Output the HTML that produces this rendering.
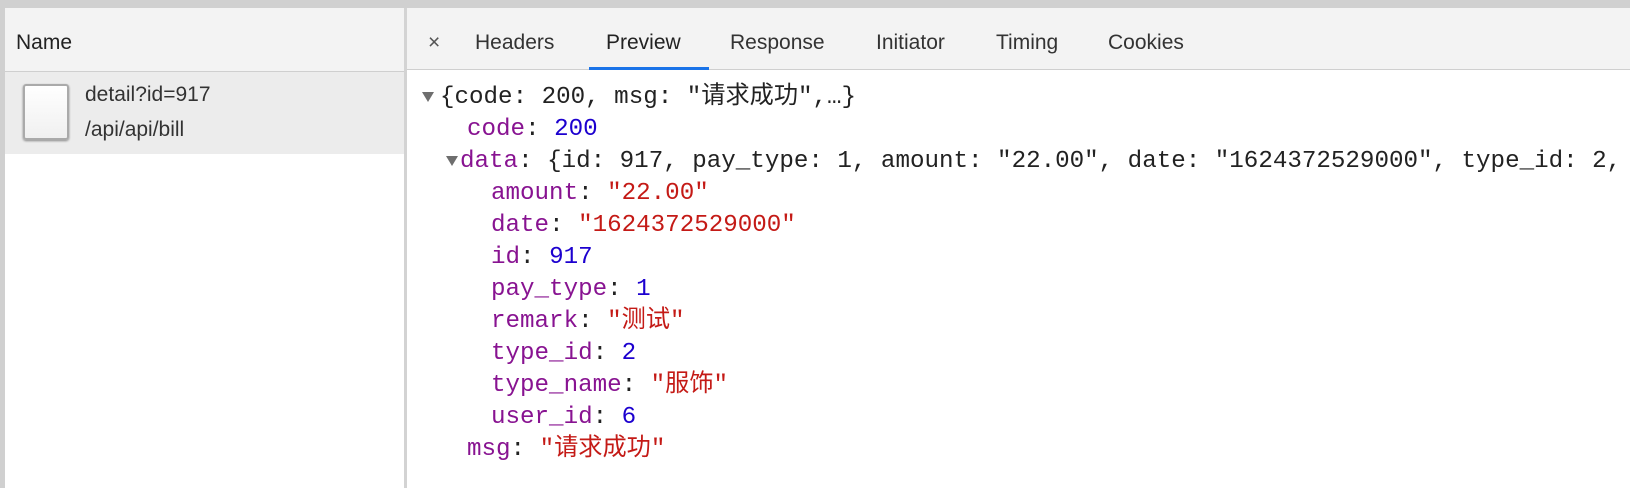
<!DOCTYPE html><html><head><meta charset="utf-8"><style>
body{margin:0;width:1630px;height:488px;background:#fff;position:relative;overflow:hidden;font-family:"Liberation Sans",sans-serif}
.a{position:absolute}
.mono{font-family:"Liberation Mono","Noto Sans CJK SC",monospace;font-size:24.2px;white-space:pre;color:#222;line-height:32px}
.k{color:#881391}.s{color:#c41a16}.n{color:#1c00cf}
.tab{position:absolute;top:31px;font-size:21px;color:#333}
.tri{display:inline-block;width:0;height:0;border-left:6px solid transparent;border-right:6px solid transparent;border-top:10px solid #6e6e6e;vertical-align:middle;margin-right:6px}
</style></head><body>
<div class="a" style="left:0;top:0;width:1630px;height:8px;background:#d0d0d0"></div>
<div class="a" style="left:0;top:8px;width:5px;height:480px;background:#d0d0d0"></div>
<div class="a" style="left:404px;top:8px;width:3px;height:480px;background:#d3d3d3"></div>
<div class="a" style="left:5px;top:8px;width:399px;height:63px;background:#f3f3f3;border-bottom:1px solid #cfcfcf"></div>
<div class="a" style="left:16px;top:31px;font-size:21px;color:#222">Name</div>
<div class="a" style="left:5px;top:72px;width:399px;height:82px;background:#ececec"></div>
<div class="a" style="left:23px;top:84px;width:42px;height:52px;background:linear-gradient(#fff,#f0f0f0);border:2px solid #aaa;border-radius:3px;box-shadow:0 1px 2px #888"></div>
<div class="a" style="left:85px;top:83px;font-size:21px;color:#333">detail?id=917</div>
<div class="a" style="left:85px;top:118px;font-size:21px;color:#333">/api/api/bill</div>
<div class="a" style="left:407px;top:8px;width:1223px;height:61px;background:#f3f3f3;border-bottom:1px solid #cfcfcf"></div>
<div class="tab" style="left:428px;color:#555">×</div>
<div class="tab" style="left:475px">Headers</div>
<div class="tab" style="left:606px;color:#222">Preview</div>
<div class="a" style="left:589px;top:67px;width:120px;height:3px;background:#1a73e8"></div>
<div class="tab" style="left:730px">Response</div>
<div class="tab" style="left:876px">Initiator</div>
<div class="tab" style="left:996px">Timing</div>
<div class="tab" style="left:1108px">Cookies</div>
<div class="a mono" style="left:422px;top:82px"><span class="tri"></span>{code: 200, msg: "请求成功",…}</div>
<div class="a mono" style="left:467px;top:114px"><span class="k">code</span>: <span class="n">200</span></div>
<div class="a mono" style="left:446px;top:146px"><span class="tri" style="margin-right:2px"></span><span class="k">data</span>: {id: 917, pay_type: 1, amount: "22.00", date: "1624372529000", type_id: 2,</div>
<div class="a mono" style="left:491px;top:178px"><span class="k">amount</span>: <span class="s">"22.00"</span>
<span class="k">date</span>: <span class="s">"1624372529000"</span>
<span class="k">id</span>: <span class="n">917</span>
<span class="k">pay_type</span>: <span class="n">1</span>
<span class="k">remark</span>: <span class="s">"测试"</span>
<span class="k">type_id</span>: <span class="n">2</span>
<span class="k">type_name</span>: <span class="s">"服饰"</span>
<span class="k">user_id</span>: <span class="n">6</span></div>
<div class="a mono" style="left:467px;top:434px"><span class="k">msg</span>: <span class="s">"请求成功"</span></div>
</body></html>
